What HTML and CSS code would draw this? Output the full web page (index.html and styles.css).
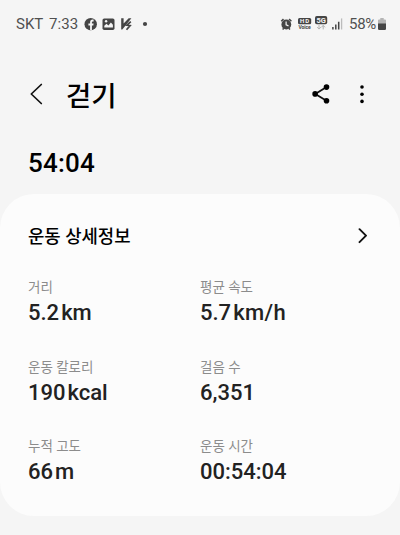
FILE: index.html
```html
<!DOCTYPE html>
<html lang="ko">
<head>
<meta charset="utf-8">
<title>걷기</title>
<link rel="stylesheet" href="styles.css">
</head>
<body>
<div class="status">
  <span class="carrier">SKT</span>
  <span class="clock">7:33</span>
  <svg class="notices" width="64" height="14" viewBox="0 0 64 14">
    <circle cx="6.7" cy="7.2" r="6.2" fill="#454545"/>
    <path d="M6.1 13.5V8.6H4.4V6.5h1.7V5.2c0-1.8 1-2.6 2.5-2.6h1v1.8h-.9c-.6 0-.8.3-.8.8v1.3h1.7l-.3 2.1H7.9v4.9z" fill="#f5f5f5"/>
    <rect x="18.5" y="1.4" width="12" height="11.6" rx="1.7" fill="#454545"/>
    <path d="M20.3 10.4V8.7l2.2-2 1.9 1.8 2.5-3 2 2.3v2.6z" fill="#f5f5f5"/>
    <circle cx="22.1" cy="4.2" r="1.2" fill="#f5f5f5"/>
    <path d="M37.2 1.3h2.4v5.3l5.1-5.3h2.7l-9.1 11.2h-1.1z" fill="#454545"/>
    <path d="M46.8 4.7l-3.9 3.5 3.2.4-3.6 4.1" fill="none" stroke="#454545" stroke-width="1.7"/>
    <circle cx="61" cy="7" r="2.1" fill="#454545"/>
  </svg>
  <svg class="system" width="64" height="18" viewBox="0 0 64 18">
    <circle cx="6.3" cy="9.5" r="4.9" fill="#454545"/>
    <path d="M1.2 6.3l2.3-2.2M11.4 6.3L9.1 4.1M2.6 14.6l1.2-1.3M10 14.6l-1.2-1.3" stroke="#454545" stroke-width="1.5"/>
    <path d="M6.1 6.5v3.4l2.4 1" fill="none" stroke="#f5f5f5" stroke-width="1.2"/>
    <rect x="18" y="3" width="13.2" height="6.2" rx="1.5" fill="#454545"/>
    <text class="badge-hd" x="24.6" y="8.2" textLength="9">HD</text>
    <text class="badge-voice" x="24.6" y="13.6" textLength="12.4">Voice</text>
    <rect x="35" y="1" width="12.2" height="8.2" rx="1.8" fill="#454545"/>
    <text class="badge-5g" x="41.1" y="7.7" textLength="9.4">5G</text>
    <path d="M39 10v4M37.2 12.2L39 14.1l1.8-1.9M43.2 14.4v-4M41.4 12.3l1.8-1.9 1.8 1.9" fill="none" stroke="#b2b2b2"/>
    <path d="M52.9 12v2.5M55.8 9.6v4.9M58.7 6.7v7.8" stroke="#454545" stroke-width="1.5"/>
    <path d="M61.6 3.4v11.1" stroke="#bcbcbc" stroke-width="1.3"/>
  </svg>
  <span class="percent">58%</span>
  <svg class="battery" width="8" height="12" viewBox="0 0 8 12">
    <path d="M2.3 0h3.4v1.4H7q1 0 1 1V6H0V2.4q0-1 1-1h1.3z" fill="#b4b4b4"/>
    <path d="M0 5.5h8v5.3q0 1.2-1.2 1.2H1.2Q0 12 0 10.8z" fill="#454545"/>
  </svg>
</div>
<header class="toolbar">
  <svg class="back" width="14" height="24" viewBox="0 0 14 24"><path d="M12.3 2.5L2.3 12l10 9.5" fill="none" stroke="#111" stroke-width="1.7" stroke-linecap="round" stroke-linejoin="round"/></svg>
  <h1>걷기</h1>
  <svg class="share" width="18" height="20" viewBox="0 0 18 20"><path d="M14.5 3L3.3 10l11.2 6.7" fill="none" stroke="#111" stroke-width="1.8"/><g fill="#000"><circle cx="14.5" cy="3.1" r="2.8"/><circle cx="3.1" cy="9.9" r="2.8"/><circle cx="14.5" cy="16.7" r="2.8"/></g></svg>
  <svg class="more" width="4" height="20" viewBox="0 0 4 20" fill="#000"><circle cx="2" cy="3" r="1.8"/><circle cx="2" cy="10.2" r="1.8"/><circle cx="2" cy="17.4" r="1.8"/></svg>
</header>
<div class="duration">54:04</div>
<main class="card">
  <div class="card-head">
    <h2>운동 상세정보</h2>
    <svg width="10" height="16" viewBox="0 0 10 16"><path d="M1.5 1.2L8 7.7l-6.5 6.5" fill="none" stroke="#111" stroke-width="1.9" stroke-linecap="round" stroke-linejoin="round"/></svg>
  </div>
  <dl class="stats">
    <div><dt>거리</dt><dd>5.2<span>km</span></dd></div>
    <div><dt>평균 속도</dt><dd>5.7<span class="speed-unit">km/h</span></dd></div>
    <div><dt>운동 칼로리</dt><dd>190<span>kcal</span></dd></div>
    <div><dt>걸음 수</dt><dd>6,351</dd></div>
    <div><dt>누적 고도</dt><dd>66<span>m</span></dd></div>
    <div><dt>운동 시간</dt><dd>00:54:04</dd></div>
  </dl>
</main>
</body>
</html>
```
FILE: styles.css
```css
* { box-sizing: border-box; }

body {
  margin: 0;
  height: 535px;
  overflow: hidden;
  background: #f5f5f5;
  color: #000;
  font-family: Roboto, "Noto Sans CJK KR", sans-serif;
}

svg { display: block; flex: none; }
h1, h2, dl, dd { margin: 0; }

.status {
  display: flex;
  align-items: center;
  height: 48px;
  padding: 0 14px 0 16px;
  color: #505050;
  font-size: 15px;
  line-height: 20px;
}
.carrier { width: 33px; }
.clock { width: 35px; letter-spacing: 0.1px; }
.system { margin-left: auto; }
.percent { width: 29px; margin-left: 5px; white-space: nowrap; letter-spacing: -0.3px; }
.system text { text-anchor: middle; font-weight: 700; }
.badge-hd { fill: #f5f5f5; font-size: 6px; }
.badge-voice { fill: #454545; font-size: 5px; }
.badge-5g { fill: #f5f5f5; font-size: 7.5px; }

.toolbar {
  display: flex;
  align-items: center;
  height: 92px;
  padding: 0 36px 0 29px;
}
h1 {
  margin-left: 23px;
  padding-top: 6px;
  font-size: 27.5px;
  font-weight: 500;
  line-height: 40px;
}
.share { margin-left: auto; }
.more { margin-left: 30px; }

.duration {
  height: 54px;
  padding: 7px 28px;
  font-size: 26px;
  font-weight: 500;
  line-height: 32px;
  letter-spacing: 0.2px;
}

.card {
  height: 322px;
  padding: 28px 28px 0;
  border-radius: 34px;
  background: #fcfcfc;
}
.card-head {
  display: flex;
  align-items: center;
  justify-content: space-between;
  height: 28px;
  padding-right: 4px;
}
h2 { padding-top: 2px; font-size: 17.8px; font-weight: 500; line-height: 28px; }

.stats {
  display: grid;
  grid-template-columns: 172px 1fr;
  grid-auto-rows: 79.7px;
  padding-top: 27px;
}
dt { color: #8c8c8c; font-size: 13.5px; line-height: 20px; }
dd { color: #222; font-size: 22px; font-weight: 500; line-height: 32px; }
dd span { margin-left: 2px; }
dd .speed-unit { letter-spacing: 0.4px; }
```
